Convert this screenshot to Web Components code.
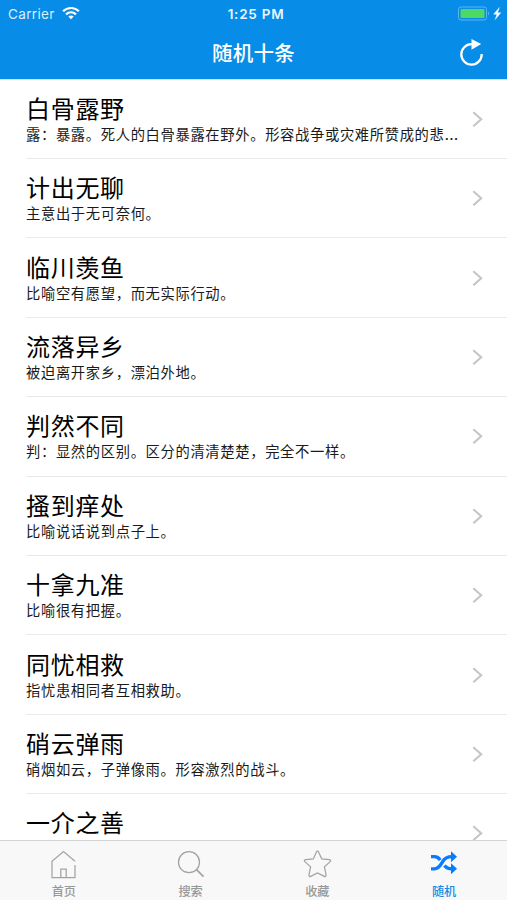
<!DOCTYPE html>
<html lang="zh-CN">
<head>
<meta charset="utf-8">
<title>随机十条</title>
<style>
html,body{margin:0;height:100%;overflow:hidden;background:#fff}
body{font-family:Inter,"Noto Sans CJK SC",sans-serif}
</style>
</head>
<body>
<idiom-app></idiom-app>
<script>
class StatusBar extends HTMLElement{
  constructor(){super();this.attachShadow({mode:'open'}).innerHTML=`
<style>
:host{display:grid;grid-template-columns:1fr auto 1fr;align-items:center;height:28px;padding:0 5px 0 8px;color:#fff;font-size:13.5px;line-height:28px;box-sizing:border-box}
.l{display:flex;align-items:center;gap:7px;color:#d9efff;letter-spacing:.35px}
.t{font-weight:600;font-size:13.500px;letter-spacing:.750px;color:#e9f7ff;margin-left:2px}
.r{display:flex;justify-content:flex-end;align-items:center}
svg{display:block}
.l svg{position:relative;top:-1px}
</style>
<div class="l"><span>Carrier</span><svg width="18" height="14" viewBox="0 0 18 14" fill="none" stroke="#fff" stroke-width="2.2"><path d="M1.1 5.2C5.6.9 12.4.9 16.9 5.2M4 8.4c2.900-2.700 7.100-2.700 10 0"/><path d="M6.300 10.500q2.700-2.100 5.400 0L9 13.200z" fill="#fff" stroke="none"/></svg></div>
<div class="t">1:25 PM</div>
<div class="r"><svg width="45" height="16" viewBox="0 0 45 16"><rect x="1.500" y="1" width="28" height="13" rx="2.500" fill="none" stroke="#5db6f2"/><rect x="3.500" y="3" width="24" height="9" rx="1" fill="#4cd964"/><path d="M31 5.300q2 2.200 0 4.400z" fill="#5db6f2"/><path d="M42.300 1.500L36.700 8.200h3.200L38.200 13.500l5.600-6.700h-3.200z" fill="#fff" stroke="#fff" stroke-width=".4"/></svg></div>`}
}
customElements.define('status-bar',StatusBar);

class NavBar extends HTMLElement{
  constructor(){super();this.attachShadow({mode:'open'}).innerHTML=`
<style>
:host{display:grid;grid-template-columns:1fr auto 1fr;align-items:center;height:51px;padding:0 22px 0 22px;box-sizing:border-box;color:#fff}
h1{margin:0;font-size:20.500px;font-weight:500;letter-spacing:.3px;line-height:49px}
svg{justify-self:end;display:block;margin-bottom:1px}
</style>
<i></i><h1><slot></slot></h1>
<svg width="26" height="30" viewBox="0 0 26 30"><path d="M15 6.200H12.500a10.200 10.200 0 1 0 10.200 9.800" fill="none" stroke="#fff" stroke-width="2.300"/><path d="M12.500 1v10.800L22.200 6z" fill="#fff"/></svg>`}
}
customElements.define('nav-bar',NavBar);

class IdiomRow extends HTMLElement{
  constructor(){super();this.attachShadow({mode:'open'}).innerHTML=`
<style>
:host{display:flex;align-items:center;height:79.420px;flex:none;margin-left:26px;padding-right:23px;box-sizing:border-box;border-bottom:1.500px solid #e9e9e9;color:#1a1a1a}
.c{flex:none;width:440px;padding-top:3px}
.t{font-size:24px;letter-spacing:.7px;line-height:29px;color:#000}
.d{font-size:14.300px;letter-spacing:.650px;line-height:22px;white-space:nowrap}
::slotted(b){font-weight:400;font-size:16px;line-height:0}
svg{margin-left:auto;display:block;flex:none}
</style>
<div class="c"><div class="t"><slot name="title"></slot></div><div class="d"><slot></slot></div></div>
<svg width="12" height="18" viewBox="0 0 12 18"><path d="M1.300 2.200L9.200 9.200l-7.900 7" fill="none" stroke="#c5c5c8" stroke-width="2.100"/></svg>`}
}
customElements.define('idiom-row',IdiomRow);

const ICONS={
home:'<path d="M26 12.300L14.500 2.500 3 12.300V28.500H26V16M11.800 28.500v-8.300h5.400v8.300" stroke-width="1.250"/>',
search:'<circle cx="13" cy="13.200" r="10.500" stroke-width="1.250"/><path d="M20.500 20.700l7 7" stroke-width="1.800"/>',
star:'<path d="M14.500 2.200q.8 0 1.200 1l3 6.700 7.500.8q2.600.4.700 2.200l-5.500 5 1.600 7.600q.3 3-2.200 1.600l-6.300-3.200-6.300 3.200q-2.500 1.400-2.200-1.600l1.600-7.600-5.500-5q-1.900-1.800.7-2.200l7.500-.8 3-6.700q.4-1 1.200-1z" stroke-width="1.250"/>',
shuffle:'<path d="M1 7.700H4.500c3 0 4.500 1.500 5.700 3.400M14.500 16.500c1.500 2.300 3.500 3.300 7.500 3.300M1 19.800H4.500c4.500 0 6-3.600 8-7s4-5.100 9.500-5.100" stroke-width="3.300"/><path d="M21 2.200L27 7.700l-6 5.500zM21 14.300l6 5.500-6 5.500z" fill="currentColor" stroke="none"/>'
};
class TabItem extends HTMLElement{
  constructor(){super();this.attachShadow({mode:'open'})}
  connectedCallback(){this.shadowRoot.innerHTML=`
<style>
:host{display:flex;flex:1;flex-direction:column;align-items:center;color:#a3a3a3;padding:8px 0 0 1px;font-size:12.200px;font-weight:500;line-height:16px}
:host([active]){color:#087cff}
:host([active]) span{color:#168de2}
svg{display:block;margin-bottom:4px}span{color:#989898}
</style>
<svg width="29" height="31" viewBox="0 0 29 31" fill="none" stroke="currentColor">${ICONS[this.getAttribute('icon')]}</svg><span><slot></slot></span>`}
}
customElements.define('tab-item',TabItem);

class TabBar extends HTMLElement{
  constructor(){super();this.attachShadow({mode:'open'}).innerHTML=`
<style>:host{display:flex;height:60.500px;flex:none;box-sizing:border-box;background:#f8f8f8;border-top:1px solid #d5d5d5}</style><slot></slot>`}
}
customElements.define('tab-bar',TabBar);

const ROWS=[
['白骨露野','露：暴露。死人的白骨暴露在野外。形容战争或灾难所赞成的悲<b>…</b>'],
['计出无聊','主意出于无可奈何。'],
['临川羡鱼','比喻空有愿望，而无实际行动。'],
['流落异乡','被迫离开家乡，漂泊外地。'],
['判然不同','判：显然的区别。区分的清清楚楚，完全不一样。'],
['搔到痒处','比喻说话说到点子上。'],
['十拿九准','比喻很有把握。'],
['同忧相救','指忧患相同者互相救助。'],
['硝云弹雨','硝烟如云，子弹像雨。形容激烈的战斗。'],
['一介之善','']];
class IdiomApp extends HTMLElement{
  constructor(){super();this.attachShadow({mode:'open'}).innerHTML=`
<style>
:host{display:flex;flex-direction:column;height:100vh;overflow:hidden}
header{flex:none;background:#078ce8}
main{flex:1;min-height:0;padding-top:.6px;overflow:hidden;display:flex;flex-direction:column;box-shadow:inset 0 1px #b9ecfc}
</style>
<header><status-bar></status-bar><nav-bar>随机十条</nav-bar></header>
<main>${ROWS.map(([t,d])=>`<idiom-row><span slot="title">${t}</span>${d||'&nbsp;'}</idiom-row>`).join('')}</main>
<tab-bar><tab-item icon="home">首页</tab-item><tab-item icon="search">搜索</tab-item><tab-item icon="star">收藏</tab-item><tab-item icon="shuffle" active>随机</tab-item></tab-bar>`}
}
customElements.define('idiom-app',IdiomApp);
</script>
</body>
</html>
